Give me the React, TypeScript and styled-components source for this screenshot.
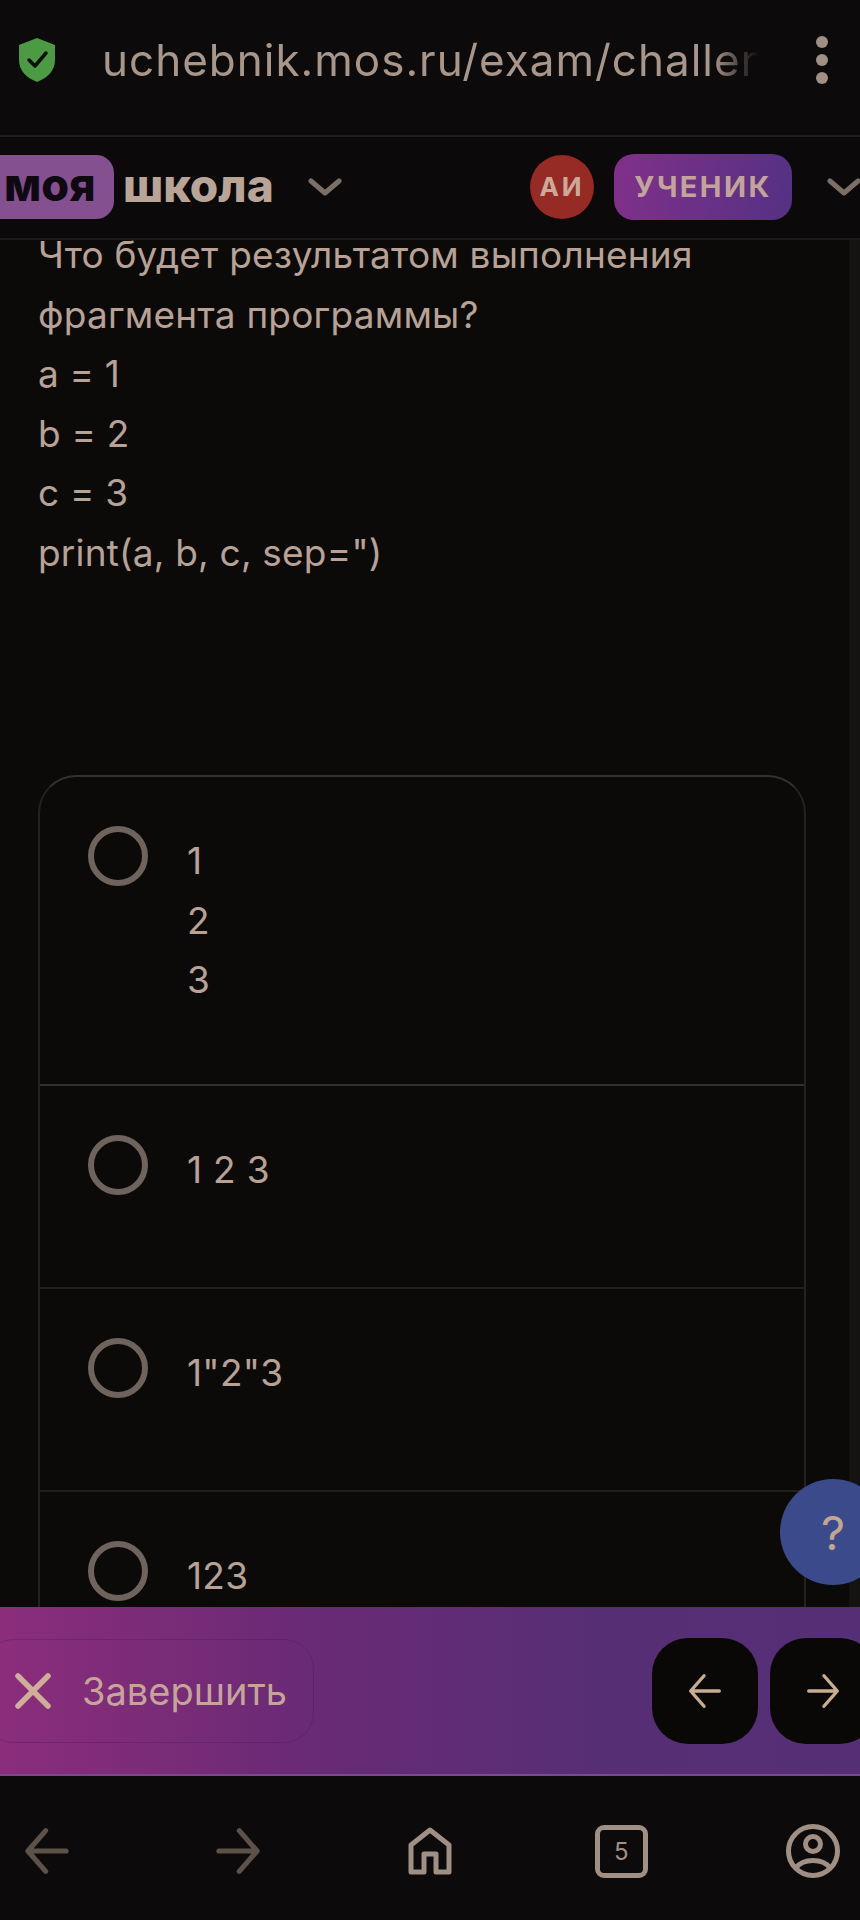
import styled, { createGlobalStyle } from "styled-components";

// ── Styles ────────────────────────────────────────────────────────────────────

const Global = createGlobalStyle`
  html, body { margin: 0; padding: 0; background: #0c0a09; }
  * { box-sizing: border-box; }
`;

const Screen = styled.div`
  width: 860px;
  height: 1920px;
  position: relative;
  display: flex;
  flex-direction: column;
  overflow: hidden;
  background: #0c0a09;
  color: #b7a295;
  font-family: Inter, "Noto Sans", sans-serif;
`;

const AddressBar = styled.div`
  height: 137px;
  flex-shrink: 0;
  display: flex;
  align-items: center;
  padding: 0 0 15px 19px;
  background: #0c0a0a;
  border-bottom: 2px solid #211d1a;
`;

const Url = styled.div`
  width: 657px;
  margin-left: 47px;
  font-size: 44px;
  letter-spacing: 1px;
  white-space: nowrap;
  overflow: hidden;
  color: #a8968a;
  -webkit-mask-image: linear-gradient(90deg, #000 93%, transparent 100%);
  mask-image: linear-gradient(90deg, #000 93%, transparent 100%);
`;

const MenuDots = styled.div`
  margin-left: 57px;
  display: flex;
  flex-direction: column;
  gap: 6px;
`;

const MenuDot = styled.span`
  width: 12px;
  height: 12px;
  border-radius: 50%;
  background: #a08f84;
`;

const Header = styled.header`
  height: 103px;
  flex-shrink: 0;
  display: flex;
  align-items: center;
  background: #0b0909;
  border-bottom: 2px solid #1d1a18;
  padding-bottom: 2px;
`;

const LogoBadge = styled.div`
  width: 134px;
  height: 64px;
  margin-left: -20px;
  padding: 0 0 4px 24px;
  flex-shrink: 0;
  display: flex;
  align-items: center;
  border-radius: 18px;
  background: #84508f;
  color: #0f0a12;
  font-size: 45px;
  font-weight: 800;
`;

const LogoText = styled.div`
  width: 151px;
  margin-left: 9px;
  padding-bottom: 4px;
  flex-shrink: 0;
  font-size: 46px;
  font-weight: 800;
  white-space: nowrap;
  color: #b9a498;
`;

const Avatar = styled.div`
  width: 64px;
  height: 64px;
  margin-left: 188px;
  flex-shrink: 0;
  display: flex;
  align-items: center;
  justify-content: center;
  border-radius: 50%;
  background: #962a25;
  color: #c9ab98;
  font-size: 26px;
  font-weight: 700;
  letter-spacing: 3px;
`;

const RoleBadge = styled.div`
  width: 178px;
  height: 66px;
  margin-left: 20px;
  flex-shrink: 0;
  display: flex;
  align-items: center;
  justify-content: center;
  border-radius: 20px;
  background: linear-gradient(100deg, #81308a, #543184);
  color: #c3a49a;
  font-size: 29px;
  font-weight: 700;
  letter-spacing: 2.4px;
`;

const HeaderChevron = styled.svg<{ $left: number }>`
  margin-left: ${({ $left }) => $left}px;
  flex-shrink: 0;
`;

const Body = styled.main`
  flex: 1;
  min-height: 0;
  display: flex;
  overflow: hidden;
`;

const Content = styled.div`
  flex: 1;
  min-width: 0;
  padding: 0 0 0 38px;
  margin-top: -15px;
`;

const Question = styled.div`
  font-size: 37px;
  line-height: 59.5px;
  letter-spacing: 0.2px;
  margin-bottom: 193px;
`;

const ScrollTrack = styled.div`
  width: 11px;
  flex-shrink: 0;
  background: #151312;
`;

const Options = styled.div`
  width: 768px;
  border: 2px solid #25211e;
  border-top-color: #35302b;
  border-radius: 38px 38px 0 0;
`;

const Option = styled.div<{ $height: number }>`
  height: ${({ $height }) => $height}px;
  padding: 49px 0 0 48px;
  display: flex;
  align-items: flex-start;
  gap: 39px;
  border-bottom: 2px solid #211e1b;
  &:first-child { border-bottom-color: #35302b; }
  &:last-child { border-bottom: none; }
`;

const Radio = styled.span`
  width: 60px;
  height: 60px;
  flex-shrink: 0;
  border: 6px solid #6f645d;
  border-radius: 50%;
`;

const OptionText = styled.div`
  padding-top: 5px;
  font-size: 37px;
  line-height: 59.5px;
  letter-spacing: 0.3px;
`;

const ActionBar = styled.div`
  height: 169px;
  flex-shrink: 0;
  display: flex;
  align-items: center;
  justify-content: space-between;
  background: linear-gradient(90deg, #8b2d7b 0%, #6a2a76 35%, #562e74 70%, #552f76 100%);
  border-bottom: 2px solid #7a4a8c;
`;

const FinishButton = styled.div`
  width: 330px;
  height: 104px;
  margin-left: -16px;
  padding-left: 30px;
  display: flex;
  align-items: center;
  gap: 31px;
  border: 1px solid rgba(70, 30, 90, 0.35);
  border-radius: 30px;
  color: #c4a598;
  font-size: 38px;
`;

const ArrowButtons = styled.div`
  display: flex;
  gap: 12px;
  margin-right: -16px;
`;

const ArrowButton = styled.div`
  width: 106px;
  height: 106px;
  display: flex;
  align-items: center;
  justify-content: center;
  border-radius: 36px;
  background: #0a0807;
`;

const BrowserNav = styled.nav`
  height: 144px;
  flex-shrink: 0;
  margin-left: -49px;
  padding-top: 6px;
  display: grid;
  grid-template-columns: repeat(5, 191.5px);
  align-items: center;
  justify-items: center;
  background: #0d0a0b;
`;

const TabCounter = styled.div`
  width: 53px;
  height: 53px;
  display: flex;
  align-items: center;
  justify-content: center;
  border: 5px solid #a08f84;
  border-radius: 9px;
  color: #a08f84;
  font-size: 24px;
`;

const HelpFab = styled.div`
  position: absolute;
  left: 780px;
  top: 1479px;
  width: 106px;
  height: 106px;
  display: flex;
  align-items: center;
  justify-content: center;
  border-radius: 50%;
  background: #3b4a8b;
  color: #c2a68f;
  font-size: 47px;
`;

// ── Icons ─────────────────────────────────────────────────────────────────────

function Shield() {
  return (
    <svg width="36" height="44" viewBox="0 0 36 44">
      <path d="M18 0 L36 7 V22 C36 33 28 40 18 44 C8 40 0 33 0 22 V7 Z" fill="#4c9a44" />
      <path d="M10 22 L16 28 L27 15" fill="none" stroke="#0c0f08" strokeWidth="3.5" strokeLinecap="round" strokeLinejoin="round" />
    </svg>
  );
}

function Chevron({ left, stroke }: { left: number; stroke: string }) {
  return (
    <HeaderChevron $left={left} width="34" height="18" viewBox="0 0 34 18">
      <path d="M3 3 L17 15 L31 3" fill="none" stroke={stroke} strokeWidth="5" strokeLinecap="round" strokeLinejoin="round" />
    </HeaderChevron>
  );
}

function Arrow({ dir, size, stroke, width }: { dir: "left" | "right"; size: number; stroke: string; width: number }) {
  const d = dir === "left" ? "M36 22 H6 M20 6 L6 22 L20 38" : "M6 22 H36 M22 6 L36 22 L22 38";
  return (
    <svg width={size} height={size} viewBox="0 0 42 44">
      <path d={d} fill="none" stroke={stroke} strokeWidth={width} strokeLinecap="round" strokeLinejoin="round" />
    </svg>
  );
}

function CloseIcon() {
  return (
    <svg width="36" height="36" viewBox="0 0 36 36">
      <path d="M3 3 L33 33 M33 3 L3 33" fill="none" stroke="#cdae98" strokeWidth="5.5" strokeLinecap="round" />
    </svg>
  );
}

function HomeIcon() {
  return (
    <svg width="44" height="48" viewBox="0 0 44 48">
      <path
        d="M3 18 L22 3 L41 18 V45 H28 V27 H16 V45 H3 Z"
        fill="none"
        stroke="#a08f84"
        strokeWidth="5"
        strokeLinejoin="round"
      />
    </svg>
  );
}

function ProfileIcon() {
  return (
    <svg width="54" height="54" viewBox="0 0 54 54">
      <circle cx="27" cy="27" r="24.5" fill="none" stroke="#a08f84" strokeWidth="5" />
      <circle cx="27" cy="20" r="7.5" fill="none" stroke="#a08f84" strokeWidth="5" />
      <path d="M10 44 C17 34 37 34 44 44" fill="none" stroke="#a08f84" strokeWidth="5" />
    </svg>
  );
}

// ── Component ─────────────────────────────────────────────────────────────────

const options = [
  { lines: ["1", "2", "3"], height: 309 },
  { lines: ["1 2 3"], height: 203 },
  { lines: ['1"2"3'], height: 203 },
  { lines: ["123"], height: 203 },
];

const question = [
  "Что будет результатом выполнения",
  "фрагмента программы?",
  "a = 1",
  "b = 2",
  "c = 3",
  'print(a, b, c, sep=")',
];

export default function App() {
  return (
    <Screen>
      <Global />

      <AddressBar>
        <Shield />
        <Url>uchebnik.mos.ru/exam/challen</Url>
        <MenuDots>
          <MenuDot />
          <MenuDot />
          <MenuDot />
        </MenuDots>
      </AddressBar>

      <Header>
        <LogoBadge>моя</LogoBadge>
        <LogoText>школа</LogoText>
        <Chevron left={34} stroke="#7c6f66" />
        <Avatar>АИ</Avatar>
        <RoleBadge>УЧЕНИК</RoleBadge>
        <Chevron left={35} stroke="#7c6f66" />
      </Header>

      <Body>
        <Content>
          <Question>
            {question.map((line) => (
              <div key={line}>{line}</div>
            ))}
          </Question>
          <Options>
            {options.map((opt) => (
              <Option key={opt.lines.join()} $height={opt.height}>
                <Radio />
                <OptionText>
                  {opt.lines.map((line) => (
                    <div key={line}>{line}</div>
                  ))}
                </OptionText>
              </Option>
            ))}
          </Options>
        </Content>
        <ScrollTrack />
      </Body>

      <ActionBar>
        <FinishButton>
          <CloseIcon />
          Завершить
        </FinishButton>
        <ArrowButtons>
          <ArrowButton>
            <Arrow dir="left" size={42} stroke="#c9ad93" width={3.5} />
          </ArrowButton>
          <ArrowButton>
            <Arrow dir="right" size={42} stroke="#c9ad93" width={3.5} />
          </ArrowButton>
        </ArrowButtons>
      </ActionBar>

      <BrowserNav>
        <Arrow dir="left" size={56} stroke="#5d5249" width={4} />
        <Arrow dir="right" size={56} stroke="#5d5249" width={4} />
        <HomeIcon />
        <TabCounter>5</TabCounter>
        <ProfileIcon />
      </BrowserNav>

      <HelpFab>?</HelpFab>
    </Screen>
  );
}
